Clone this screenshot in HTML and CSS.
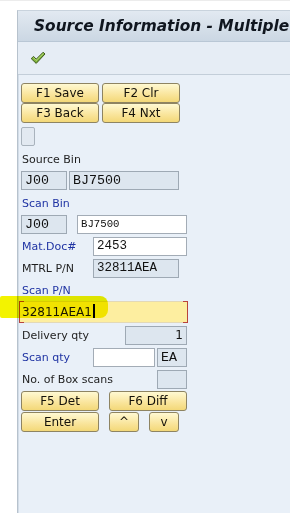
FILE: index.html
```html
<!DOCTYPE html>
<html>
<head>
<meta charset="utf-8">
<link rel="stylesheet" href="styles.css">
</head>
<body>
<div class="frame">
  <div class="titlebar"><span class="title">Source Information - Multiple</span></div>
  <div class="toolbar">
    <svg class="check" width="16" height="14" viewBox="0 0 16 14">
      <path d="M1.2 7.6 L3.6 5.4 L6.2 8.2 L13.2 1.2 L15 3 L6.2 12.4 Z" fill="#7fb23a" stroke="#3d5a1c" stroke-width="1" stroke-linejoin="round"/>
      <path d="M3.2 6.4 L6.2 9.4 L13.4 2.4" fill="none" stroke="#c4e48c" stroke-width="0.8"/>
    </svg>
  </div>
  <div class="content">
    <div class="brow">
      <div class="btn w78">F1 Save</div>
      <div class="btn w78 ml3">F2 Clr</div>
    </div>
    <div class="brow">
      <div class="btn w78">F3 Back</div>
      <div class="btn w78 ml3">F4 Nxt</div>
    </div>
    <div class="chk"></div>
    <div class="lrow">Source Bin</div>
    <div class="frow">
      <div class="fld grey mono w46">J00</div>
      <div class="fld grey mono w110 ml2">BJ7500</div>
    </div>
    <div class="lrow2 blue">Scan Bin</div>
    <div class="frow">
      <div class="fld grey mono w46">J00</div>
      <div class="fld white small w110 ml10">BJ7500</div>
    </div>
    <div class="frow">
      <div class="lbl blue lw72">Mat.Doc#</div>
      <div class="fld white mono2 w94">2453</div>
    </div>
    <div class="frow">
      <div class="lbl lw72">MTRL P/N</div>
      <div class="fld grey mono2 w86">32811AEA</div>
    </div>
    <div class="lrow3 blue">Scan P/N</div>
    <div class="yrow">
      <div class="yfld">32811AEA1<span class="caret"></span></div>
    </div>
    <div class="frow">
      <div class="lbl lw104">Delivery qty</div>
      <div class="fld grey num w62">1</div>
    </div>
    <div class="frow">
      <div class="lbl blue lw72">Scan qty</div>
      <div class="fld white w62"></div>
      <div class="fld grey mono w30 ml2">EA</div>
    </div>
    <div class="frow r21">
      <div class="lbl lw136">No. of Box scans</div>
      <div class="fld grey w30"></div>
    </div>
    <div class="brow b21">
      <div class="btn w78">F5 Det</div>
      <div class="btn w78 ml10">F6 Diff</div>
    </div>
    <div class="brow">
      <div class="btn w78">Enter</div>
      <div class="btn w30 ml10">^</div>
      <div class="btn w30 ml10">v</div>
    </div>
  </div>
  <div class="marker"></div>
</div>
</body>
</html>
```
FILE: styles.css
```css
html, body {
  margin: 0;
  padding: 0;
  background: #ffffff;
  height: 100%;
  overflow: hidden;
}
body {
  border-top: 1px solid #ececec;
  box-sizing: border-box;
  font-family: "DejaVu Sans", Tahoma, sans-serif;
}
.frame {
  margin: 9px 0 0 17px;
  height: 504px;
  border-left: 1px solid #b7c2cd;
  border-top: 1px solid #c9d3dd;
  background: #e9f0f8;
  overflow: hidden;
}
.titlebar {
  height: 30px;
  background: linear-gradient(#e2e9f1, #cbd7e3);
  border-bottom: 1px solid #b9c7d5;
  white-space: nowrap;
  overflow: hidden;
  padding-left: 16px;
  line-height: 29px;
}
.title {
  font-family: "DejaVu Sans", Verdana, sans-serif;
  font-weight: bold;
  font-style: italic;
  font-size: 15.4px;
  color: #10161f;
}
.toolbar {
  height: 32px;
  background: #e6edf5;
  border-bottom: 1px solid #c3ced9;
  display: flex;
  align-items: center;
  padding-left: 12px;
}
.check { display: block; margin-top: -1px; }
.content {
  padding: 8px 0 0 2px;
  border-left: 1px solid #d3dde8;
  height: 100%;
  box-sizing: border-box;
  position: relative;
}
.brow { display: flex; height: 20px; }
.brow.b21 { height: 21px; }
.btn {
  box-sizing: border-box;
  height: 20px;
  border: 1px solid #8e8462;
  border-radius: 3px;
  background: linear-gradient(#fff9d2, #f9e49a 60%, #f3d878);
  font-size: 12px;
  line-height: 18px;
  text-align: center;
  color: #15120a;
}
.chk {
  margin-top: 4px;
  width: 14px;
  height: 19px;
  box-sizing: border-box;
  border: 1px solid #a9b3bd;
  border-radius: 2px;
  background: #e2e9f1;
}
.lrow {
  height: 25px;
  line-height: 27px;
  font-size: 11px;
  color: #1e1e1e;
  padding-left: 1px;
}
.lrow2 {
  height: 22px;
  line-height: 22px;
  font-size: 11px;
  padding-left: 1px;
}
.lrow3 {
  height: 20px;
  line-height: 20px;
  font-size: 11px;
  padding-left: 1px;
}
.blue { color: #1f33a3 !important; }
.frow { display: flex; height: 22px; }
.frow.r21 { height: 21px; }
.lbl {
  font-size: 11px;
  line-height: 19px;
  color: #1e1e1e;
  padding-left: 1px;
  box-sizing: border-box;
  white-space: nowrap;
}
.fld {
  box-sizing: border-box;
  height: 19px;
  border: 1px solid #a4adb7;
  padding-left: 3px;
  line-height: 17px;
  color: #111;
  white-space: nowrap;
  overflow: hidden;
}
.grey { background: #dde6ef; border-color: #9ea9b4; }
.white { background: #ffffff; border-color: #a3acb6; }
.mono { font-family: "Liberation Mono", monospace; font-size: 13.3px; }
.mono2 { font-family: "Liberation Mono", monospace; font-size: 12.5px; }
.small { font-family: "Liberation Mono", monospace; font-size: 10.7px; }
.num { font-size: 12px; text-align: right; padding-right: 3px; }
.yrow { height: 25px; }
.yfld {
  position: relative;
  margin-left: -2px;
  width: 169px;
  height: 22px;
  box-sizing: border-box;
  background: #fdeea0;
  border-top: 1px solid #e3d9b6;
  border-bottom: 1px solid #e3d9b6;
  font-size: 12px;
  line-height: 21px;
  padding-left: 3px;
  color: #1a1608;
}
.yfld::before, .yfld::after {
  content: "";
  position: absolute;
  top: -1px;
  bottom: -1px;
  width: 4px;
  border: 1px solid #b8433c;
}
.yfld::before { left: 0; border-right: none; }
.yfld::after { right: 0; border-left: none; }
.caret {
  display: inline-block;
  width: 2px;
  height: 14px;
  background: #000;
  vertical-align: -2px;
  margin-left: 1px;
}
.marker {
  position: absolute;
  left: 0;
  top: 296px;
  width: 108px;
  height: 22px;
  background: #f3f300;
  mix-blend-mode: multiply;
  border-radius: 2px 8px 8px 2px;
}
.w30 { width: 30px; }
.w46 { width: 46px; }
.w62 { width: 62px; }
.w78 { width: 78px; }
.w86 { width: 86px; }
.w94 { width: 94px; }
.w110 { width: 110px; }
.ml2 { margin-left: 2px; }
.ml3 { margin-left: 3px; }
.ml10 { margin-left: 10px; }
.lw72 { width: 72px; }
.lw104 { width: 104px; }
.lw136 { width: 136px; }
```
